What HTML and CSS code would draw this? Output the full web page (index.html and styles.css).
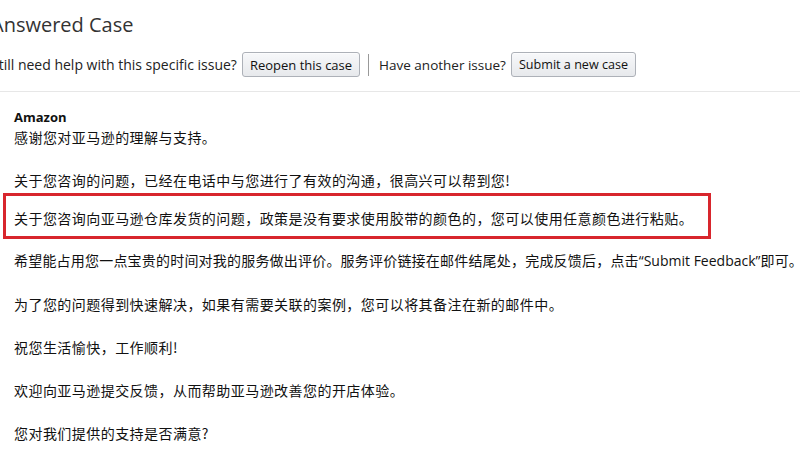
FILE: index.html
```html
<!DOCTYPE html>
<html lang="zh-CN">
<head>
  <meta charset="UTF-8" />
  <meta name="viewport" content="width=device-width, initial-scale=1.0"/>
  <title>Answered Case</title>
  <link rel="stylesheet" href="styles.css">
</head>
<body>
  <div class="case-head">
    <h1>Answered Case</h1>
    <div class="case-actions">
      <span>Still need help with this specific issue?</span>
      <button class="btn">Reopen this case</button>
      <span class="divider"></span>
      <span>Have another issue?</span>
      <button class="btn">Submit a new case</button>
    </div>
  </div>

  <div class="message">
    <div class="sender">Amazon</div>
    <p class="first">感谢您对亚马逊的理解与支持。</p>
    <p class="before-mark">关于您咨询的问题，已经在电话中与您进行了有效的沟通，很高兴可以帮到您!</p>
    <div class="marked">
      <p>关于您咨询向亚马逊仓库发货的问题，政策是没有要求使用胶带的颜色的，您可以使用任意颜色进行粘贴。</p>
    </div>
    <p class="after-mark">希望能占用您一点宝贵的时间对我的服务做出评价。服务评价链接在邮件结尾处，完成反馈后，点击<span class="latin">“Submit Feedback”</span>即可。</p>
    <p>为了您的问题得到快速解决，如果有需要关联的案例，您可以将其备注在新的邮件中。</p>
    <p>祝您生活愉快，工作顺利!</p>
    <p>欢迎向亚马逊提交反馈，从而帮助亚马逊改善您的开店体验。</p>
    <p>您对我们提供的支持是否满意?</p>
  </div>
</body>
</html>
```

FILE: styles.css
```css
body {
  margin: 0;
  font-family: "Open Sans", "Noto Sans CJK SC", sans-serif;
  color: #111;
  background-color: #fff;
  overflow: hidden;
}
.case-head {
  margin-left: -9px;
  padding-top: 11px;
  border-bottom: 1px solid #e7e7e7;
  padding-bottom: 14px;
}
h1 {
  margin: 0;
  font-size: 20px;
  font-weight: normal;
  line-height: 28px;
  color: #333;
}
.case-actions {
  display: flex;
  align-items: center;
  margin-top: 13px;
  font-size: 14px;
  color: #222;
  white-space: nowrap;
}
.case-actions span:nth-of-type(3) {
  font-size: 13.5px;
}
.btn {
  margin-left: 5px;
  height: 25px;
  padding: 0 7px;
  font-family: "Open Sans", sans-serif;
  font-size: 13px;
  color: #111;
  background: linear-gradient(#f7f8fa, #e7e9ec);
  border: 1px solid #adb1b8;
  border-radius: 3px;
  box-shadow: 0 1px 0 rgba(255,255,255,0.6) inset;
}
.case-actions .btn:last-child {
  font-size: 12.6px;
  padding: 0 7px;
}
.divider {
  width: 1px;
  height: 22px;
  background-color: #999;
  margin: 0 10px 0 8px;
}
.message {
  padding: 15px 0 0 14px;
  font-family: "Noto Sans CJK SC", sans-serif;
  font-size: 14px;
  letter-spacing: 0.45px;
}
.sender {
  font-family: "Open Sans", sans-serif;
  font-weight: bold;
  font-size: 13px;
  line-height: 20px;
  letter-spacing: 0;
}
.message p {
  margin: 0 0 23px;
  line-height: 20px;
  white-space: nowrap;
}
.message p.before-mark {
  margin-bottom: 3px;
}
.latin {
  font-family: "Open Sans", sans-serif;
  letter-spacing: 0;
}
.marked {
  margin-left: -11px;
  width: 694px;
  padding: 12px 0 8px 8px;
  border: 3px solid #d8262d;
}
.marked p {
  margin: 0;
}
.message p.after-mark {
  margin-top: 11px;
  letter-spacing: 0.2px;
}
```
